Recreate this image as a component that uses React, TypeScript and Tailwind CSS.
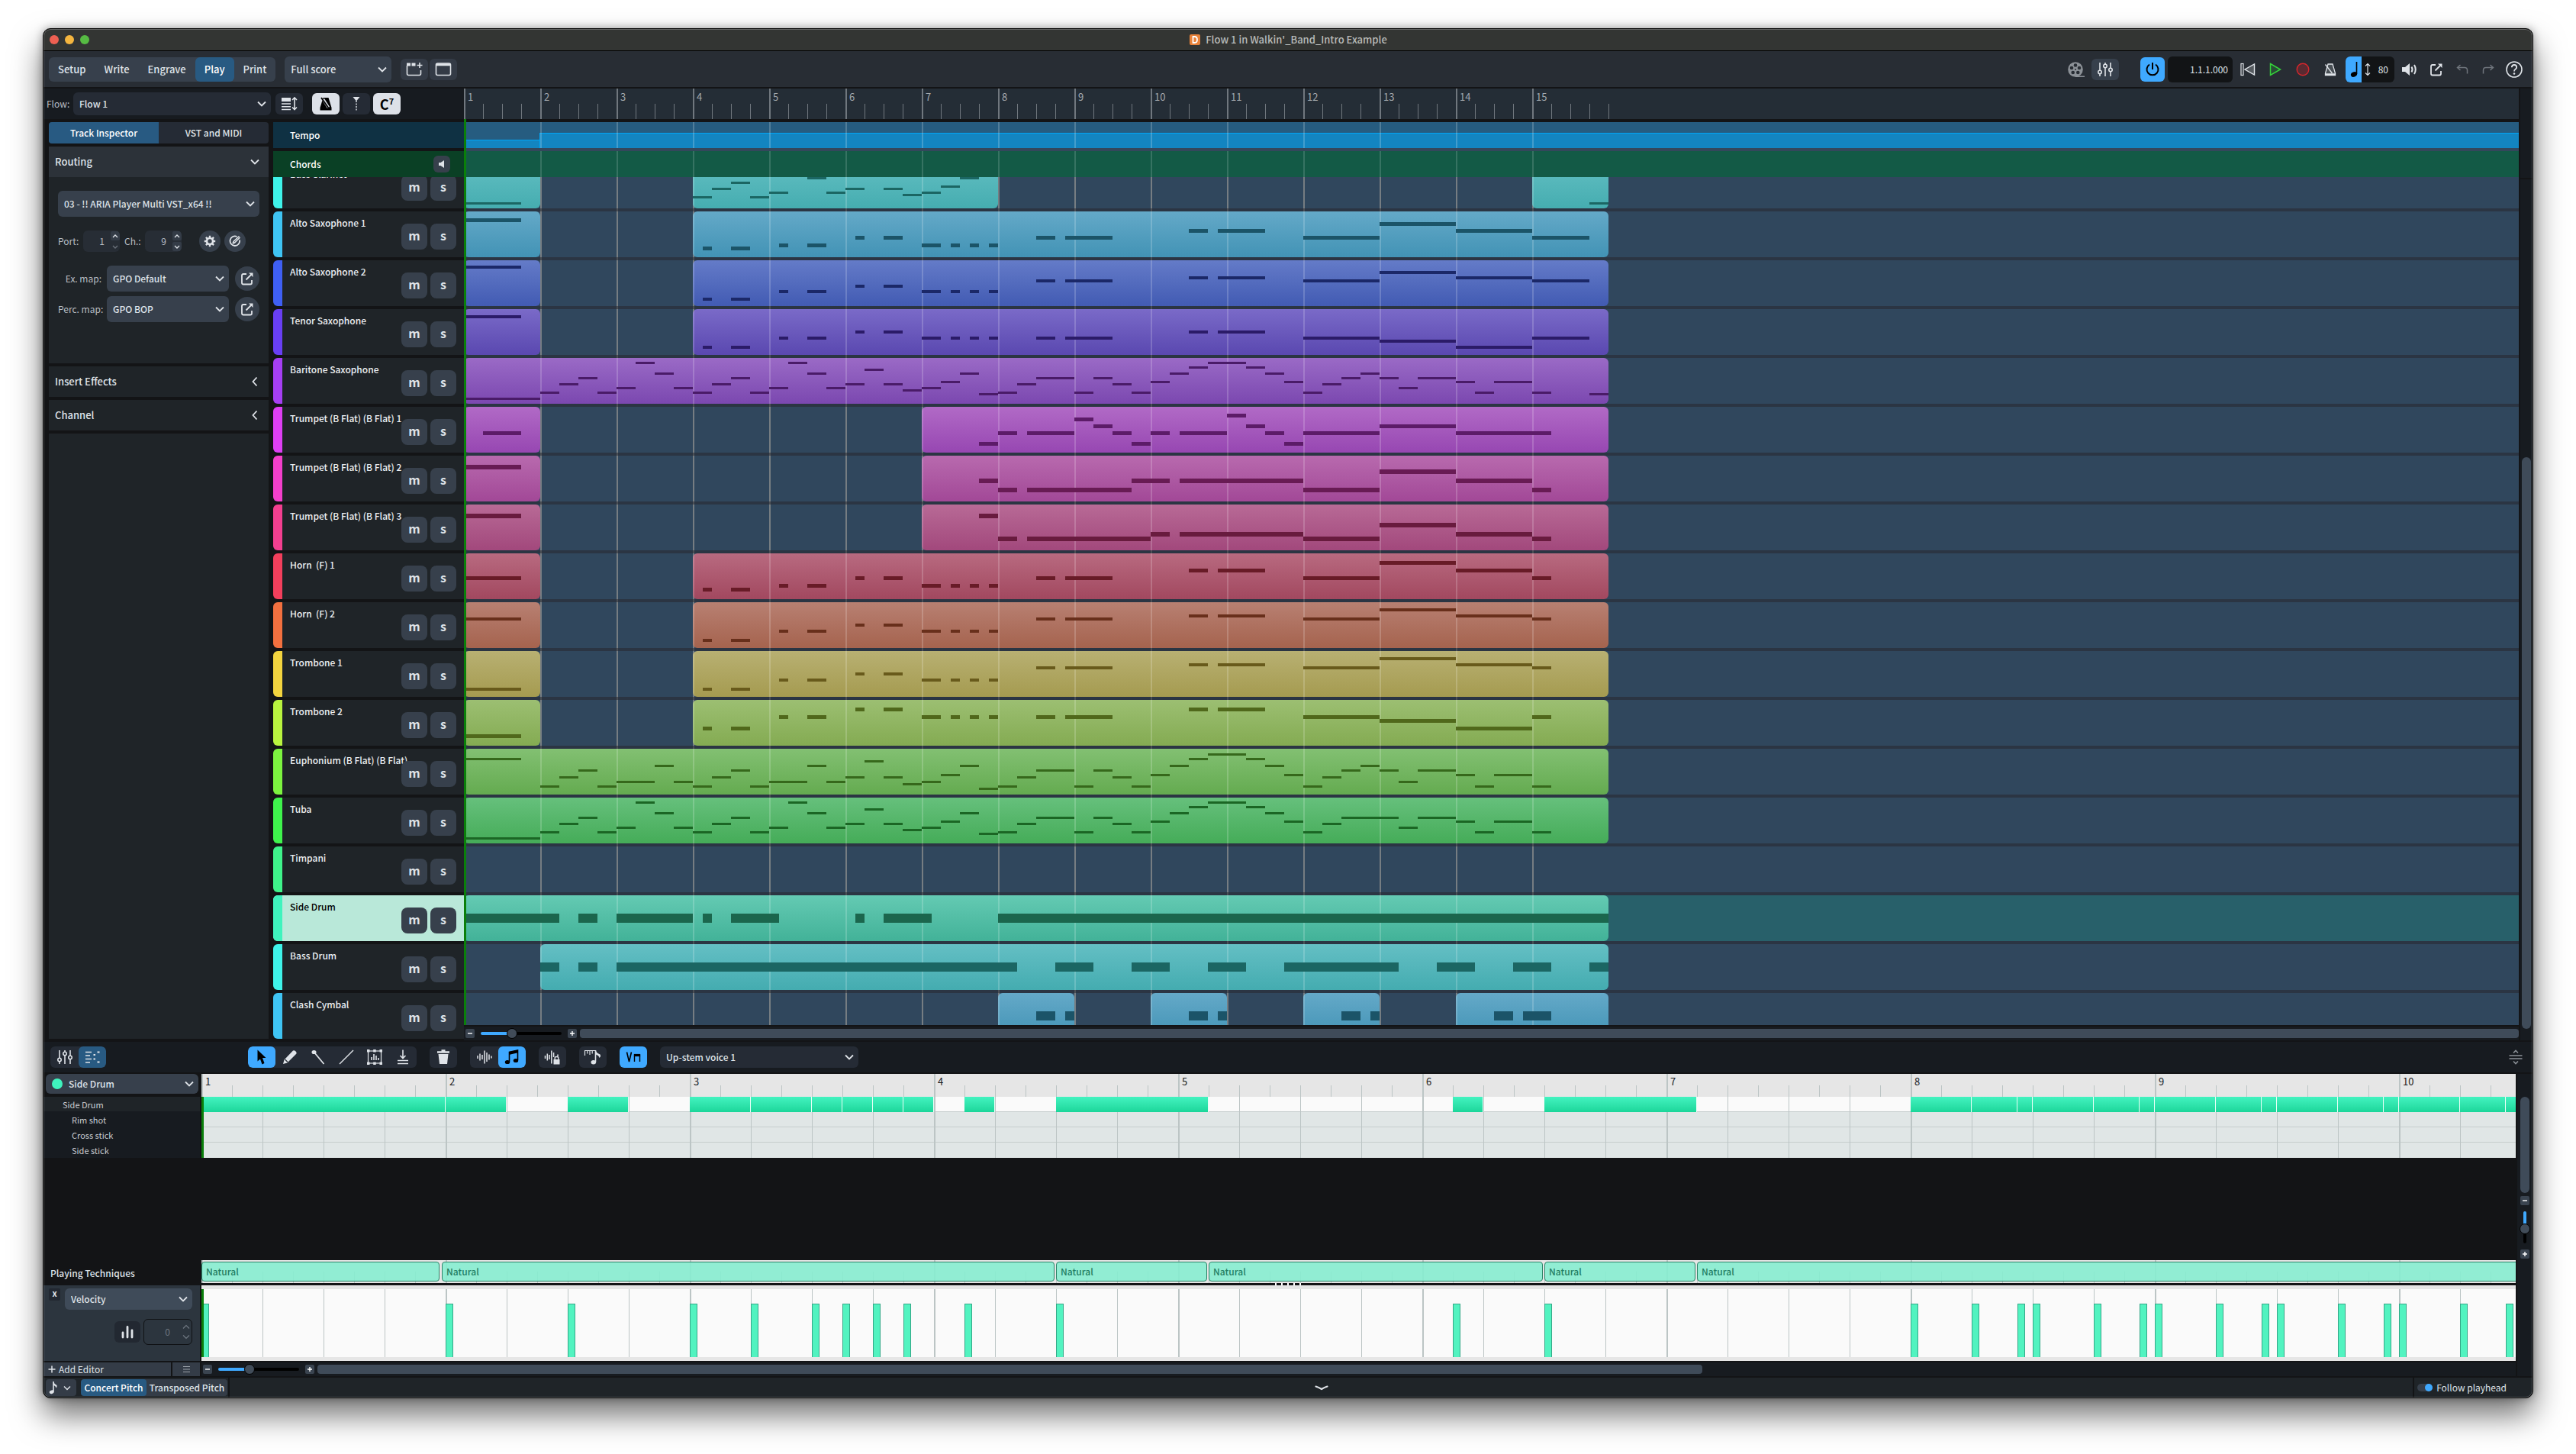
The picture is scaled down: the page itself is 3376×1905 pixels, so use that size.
import React from 'react';
import type { ReactNode } from 'react';

type Note = [start: number, length: number, y: number];

interface Track {
  name: string;
  strip: string;
  top: string;
  bottom: string;
  ink: string;
  noteHeight: number;
  clips: [number, number][];
  notes: Note[];
  selected?: boolean;
}

const BEAT = 25;
const EDITOR_BEAT = 80;

/** Shared brass and sax rhythm; each letter is the vertical place of one group of notes. */
function chorale(first: number, a: number, b: number, c: number, d: number, e: number, f: number, g: number, h: number, i: number, last: number): Note[] {
  return [
    [0, 3, first],
    [12.5, 0.5, a], [14, 1, a],
    [16.5, 0.5, b], [18, 1, b],
    [20.5, 0.5, c], [22, 1, c],
    [24, 1, b], [25.5, 0.5, b], [26.5, 0.5, b], [27.5, 0.5, b],
    [30, 1, d], [31.5, 2.5, d],
    [38, 1, e], [39.5, 2.5, e],
    [44, 4, f], [48, 4, g], [52, 4, h], [56, last, i],
  ];
}

const walkingBass: Note[] = [
  [0, 4, 52], [4, 1, 44], [5, 1, 33], [6, 1, 25], [7, 1, 44], [8, 1, 38], [9, 1, 5], [10, 1, 19], [11, 1, 38],
  [12, 1, 44], [13, 1, 33], [14, 1, 25], [15, 1, 44], [16, 1, 38], [17, 1, 5], [18, 1, 19], [19, 1, 38],
  [20, 1, 33], [21, 1, 14], [22, 1, 33], [23, 1, 41], [24, 1, 38], [25, 1, 30], [26, 1, 19], [27, 1, 46],
  [28, 1, 44], [29, 1, 33], [30, 2, 25], [32, 1, 44], [33, 1, 25], [34, 1, 33], [35, 1, 44],
  [36, 1, 30], [37, 1, 19], [38, 1, 11], [39, 2, 5], [41, 1, 11], [42, 1, 19], [43, 1, 30],
  [44, 1, 44], [45, 1, 33], [46, 1, 25], [47, 1, 19], [48, 1, 25], [49, 1, 38], [50, 2, 25],
  [52, 1, 30], [53, 1, 44], [54, 2, 30], [56, 1, 44],
];

const bassClarinet: Note[] = [
  [0, 3, 52],
  ...walkingBass.filter(([s]) => s >= 12 && s < 27 && s !== 17 && s !== 21),
  [59, 1, 52],
];

const euphonium: Note[] = [
  [0, 3, 12], [4, 1, 48], [5, 1, 36], [6, 1, 27], [7, 1, 48], [8, 2, 42], [10, 1, 21], [11, 1, 42],
  [12, 1, 48], [13, 1, 36], [14, 1, 27], [15, 1, 48], [16, 2, 42], [18, 1, 21], [19, 1, 42],
  [20, 1, 36], [21, 1, 15], [22, 1, 36], [23, 1, 45], [24, 1, 42], [25, 1, 33], [26, 1, 21], [27, 1, 51],
  [28, 1, 48], [29, 1, 36], [30, 2, 27], [32, 1, 48], [33, 1, 27], [34, 1, 36], [35, 1, 48],
  [36, 1, 33], [37, 1, 21], [38, 1, 12], [39, 2, 6], [41, 1, 12], [42, 1, 21], [43, 1, 33],
  [44, 1, 48], [45, 1, 36], [46, 1, 27], [47, 1, 21], [48, 1, 27], [49, 1, 42], [50, 2, 27],
  [52, 1, 33], [53, 1, 48], [54, 2, 33], [56, 1, 48],
];

const tracks: Track[] = [
  { name: 'Bass Clarinet', strip: '#3ff3ea', top: '#62bec2', bottom: '#45adb0', ink: '#1b6663', noteHeight: 3, clips: [[0, 4], [12, 28], [56, 60]], notes: bassClarinet },
  { name: 'Alto Saxophone 1', strip: '#3fc4f3', top: '#64a9c8', bottom: '#4293b5', ink: '#1b5468', noteHeight: 5, clips: [[0, 4], [12, 60]], notes: chorale(9, 46, 42, 32, 32, 23, 32, 14, 23, 32, 3) },
  { name: 'Alto Saxophone 2', strip: '#3f5ff3', top: '#647bc8', bottom: '#425bb3', ink: '#1b2868', noteHeight: 4, clips: [[0, 4], [12, 60]], notes: chorale(7, 49, 39, 32, 25, 21, 25, 14, 21, 25, 3) },
  { name: 'Tenor Saxophone', strip: '#693ff3', top: '#7a6ac8', bottom: '#5a48b0', ink: '#2b1b68', noteHeight: 4, clips: [[0, 4], [12, 60]], notes: chorale(8, 48, 36, 28, 36, 28, 36, 40, 48, 36, 3) },
  { name: 'Baritone Saxophone', strip: '#a63ff3', top: '#9a6ac6', bottom: '#7b48b0', ink: '#4a1b68', noteHeight: 3, clips: [[0, 60]], notes: [...walkingBass, [59, 1, 46]] },
  {
    name: 'Trumpet (B Flat) (B Flat) 1', strip: '#dd3ff3', top: '#b16ac6', bottom: '#9747b2', ink: '#5c1b68', noteHeight: 5, clips: [[0, 4], [24, 60]],
    notes: [[1, 2, 32], [27, 1, 46], [28, 1, 32], [29.5, 2.5, 32], [32, 1, 14], [33, 1, 23], [34, 1, 32], [35, 1, 46], [36, 1, 32], [37.5, 2.5, 32], [40, 1, 9], [41, 1, 23], [42, 1, 32], [43, 1, 46], [44, 4, 32], [48, 4, 23], [52, 5, 32]],
  },
  {
    name: 'Trumpet (B Flat) (B Flat) 2', strip: '#f33fcb', top: '#b86aae', bottom: '#a24897', ink: '#681b54', noteHeight: 6, clips: [[0, 4], [24, 60]],
    notes: [[0, 3, 12], [27, 1, 30], [28, 1, 42], [29.5, 5.5, 42], [35, 2, 30], [37.5, 6.5, 30], [44, 4, 42], [48, 4, 18], [52, 4, 30], [56, 1, 42]],
  },
  {
    name: 'Trumpet (B Flat) (B Flat) 3', strip: '#f33f90', top: '#b86a96', bottom: '#a2487c', ink: '#681b3e', noteHeight: 6, clips: [[0, 4], [24, 60]],
    notes: [[0, 3, 12], [27, 1, 12], [28, 1, 42], [29.5, 6.5, 42], [36, 1, 36], [37.5, 6.5, 36], [44, 4, 42], [48, 4, 24], [52, 4, 36], [56, 1, 42]],
  },
  { name: 'Horn  (F) 1', strip: '#f33f5c', top: '#b86a80', bottom: '#a2485f', ink: '#681b27', noteHeight: 5, clips: [[0, 4], [12, 60]], notes: chorale(30, 45, 40, 30, 30, 20, 30, 10, 20, 30, 1) },
  { name: 'Horn  (F) 2', strip: '#f3703f', top: '#b88072', bottom: '#a5634e', ink: '#682f1b', noteHeight: 4, clips: [[0, 4], [12, 60]], notes: chorale(20, 48, 36, 28, 20, 16, 20, 8, 16, 20, 1) },
  { name: 'Trombone 1', strip: '#f3d43f', top: '#b8b072', bottom: '#a59b50', ink: '#685a1b', noteHeight: 4, clips: [[0, 4], [12, 60]], notes: chorale(48, 48, 36, 28, 20, 16, 20, 8, 16, 20, 1) },
  { name: 'Trombone 2', strip: '#b9f33f', top: '#9cbf72', bottom: '#84ab52', ink: '#50681b', noteHeight: 5, clips: [[0, 4], [12, 60]], notes: chorale(45, 35, 20, 10, 20, 10, 20, 25, 35, 20, 1) },
  { name: 'Euphonium (B Flat) (B Flat)', strip: '#7cf33f', top: '#82c072', bottom: '#64ab50', ink: '#36681b', noteHeight: 3, clips: [[0, 60]], notes: euphonium },
  { name: 'Tuba', strip: '#3ff34c', top: '#66c07c', bottom: '#45ac58', ink: '#1b6624', noteHeight: 3, clips: [[0, 60]], notes: walkingBass.map(([s, l, y]): Note => [s, l, s === 47 ? 25 : y]) },
  { name: 'Timpani', strip: '#3ff38a', top: '#66c07c', bottom: '#45ac58', ink: '#1b6624', noteHeight: 3, clips: [], notes: [] },
  {
    name: 'Side Drum', strip: '#3ff3bd', top: '#64cab3', bottom: '#42b298', ink: '#1b664d', noteHeight: 12, clips: [[0, 60]], selected: true,
    notes: [[0, 5, 24], [6, 1, 24], [8, 4, 24], [12.5, 0.5, 24], [14, 2.5, 24], [20.5, 0.5, 24], [22, 2.5, 24], [28, 32, 24]],
  },
  {
    name: 'Bass Drum', strip: '#3ff3ea', top: '#64bfc4', bottom: '#44acb0', ink: '#1b6663', noteHeight: 12, clips: [[4, 60]],
    notes: [[4, 1, 24], [6, 1, 24], [8, 21, 24], [31, 2, 24], [35, 2, 24], [39, 2, 24], [43, 6, 24], [51, 2, 24], [55, 2, 24], [59, 1, 24]],
  },
  {
    name: 'Clash Cymbal', strip: '#3fc4f3', top: '#64a9c8', bottom: '#4293b5', ink: '#1b5468', noteHeight: 12, clips: [[28, 32], [36, 40], [44, 48], [52, 60]],
    notes: [[30, 1, 24], [31.5, 0.5, 24], [38, 1, 24], [39.5, 0.5, 24], [46, 1, 24], [47.5, 0.5, 24], [54, 1, 24], [55.5, 1.5, 24]],
  },
];

const editorHits: [number, number][] = [
  [0, 4], [4, 1], [6, 1], [8, 1], [9, 1], [10, 0.5], [10.5, 0.5], [11, 0.5], [11.5, 0.5], [12.5, 0.5], [14, 2.5],
  [20.5, 0.5], [22, 2.5], [28, 1], [29, 0.75], [29.75, 0.25], [30, 1], [31, 0.75], [31.75, 0.25], [32, 1],
  [33, 0.75], [33.75, 0.25], [34, 1], [35, 0.75], [35.75, 0.25], [36, 1], [37, 0.75], [37.75, 0.5],
];

const techniqueSpans: [number, number][] = [[0, 312], [315, 1118], [1120, 1318], [1320, 1758], [1760, 1958], [1960, 3060]];

/* ---------- icons ---------- */

function Svg({ w, h, children, className = '' }: { w: number; h: number; children: ReactNode; className?: string }) {
  return (
    <svg width={w} height={h} viewBox={`0 0 ${w} ${h}`} fill="none" stroke="currentColor" strokeWidth="1.6" className={`shrink-0 ${className}`} aria-hidden="true">
      {children}
    </svg>
  );
}

const Chevron = () => <Svg w={12} h={8}><path d="M1 1.5 L6 6.5 L11 1.5" strokeWidth="1.8" /></Svg>;
const ChevronLeft = () => <Svg w={8} h={14}><path d="M6.5 1.5 L1.5 7 L6.5 12.5" strokeWidth="1.8" /></Svg>;

const TabsPlusIcon = () => (
  <Svg w={22} h={20}>
    <path d="M1.5 5 V15.5 Q1.5 17.5 3.5 17.5 H17.5 Q19.5 17.5 19.5 15.5 V11" />
    <path d="M1 3.5 H6 M7.5 3.5 H12.5" strokeWidth="4" />
    <path d="M18 1 V8 M14.5 4.5 H21.5" />
  </Svg>
);
const WindowIcon = () => (
  <Svg w={22} h={20}>
    <rect x="1.5" y="2" width="19" height="15.5" rx="2" />
    <path d="M1.5 3.8 H20.5" strokeWidth="3" />
  </Svg>
);
const TrackHeightIcon = () => (
  <Svg w={22} h={20}>
    <rect x="1" y="2" width="12" height="5" fill="currentColor" stroke="none" />
    <path d="M1 10 H13 M1 13.8 H13 M1 17.5 H13" />
    <path d="M18 2.5 V17 M15 5 L18 2 L21 5 M15 14.5 L18 17.5 L21 14.5" />
  </Svg>
);
const MetronomeSolid = () => (
  <Svg w={18} h={20}>
    <path d="M5.5 2 H12.5 L16.5 15 V18.5 H1.5 V15 Z" fill="currentColor" stroke="none" />
    <path d="M5.5 4 L12.5 15" stroke="#dde1e8" strokeWidth="3.6" />
    <path d="M3 2 L12.5 15.5" strokeWidth="1.8" />
  </Svg>
);
const PlayheadIcon = () => (
  <Svg w={10} h={20}>
    <path d="M0.5 1 H9.5 L5 6.5 Z" fill="currentColor" stroke="none" />
    <path d="M5 6 V19.5" strokeDasharray="2 1.5" strokeWidth="1.4" />
  </Svg>
);
const GearIcon = () => (
  <Svg w={16} h={16}>
    <circle cx="8" cy="8" r="4" strokeWidth="2.6" />
    <path d="M8 0.8 V3.5 M8 12.5 V15.2 M0.8 8 H3.5 M12.5 8 H15.2 M2.9 2.9 L4.8 4.8 M11.2 11.2 L13.1 13.1 M13.1 2.9 L11.2 4.8 M4.8 11.2 L2.9 13.1" strokeWidth="2.4" />
  </Svg>
);
const EditCircleIcon = () => (
  <Svg w={16} h={16}>
    <path d="M10.5 2 A6.3 6.3 0 1 0 14 6.5" strokeWidth="1.8" />
    <path d="M5 11 L6 8.5 L13.5 1.5 M5 11 L7.5 10 L14.5 3" strokeWidth="1.5" />
  </Svg>
);
const ExternalIcon = () => (
  <Svg w={18} h={18}>
    <path d="M8 3 H4 Q2 3 2 5 V14.5 Q2 16.5 4 16.5 H13 Q15 16.5 15 14.5 V11" strokeWidth="1.8" />
    <path d="M7.5 10.5 L15 3" strokeWidth="1.8" />
    <path d="M11 1.5 H16.5 V7 Z" fill="currentColor" stroke="none" />
  </Svg>
);
const FilmIcon = () => (
  <Svg w={24} h={22}>
    <circle cx="11" cy="11" r="9" fill="currentColor" />
    <g fill="#282d34" stroke="none">
      <circle cx="11" cy="5.5" r="2.3" /><circle cx="16" cy="9" r="2.3" /><circle cx="14.3" cy="15" r="2.3" />
      <circle cx="7.7" cy="15" r="2.3" /><circle cx="6" cy="9" r="2.3" /><circle cx="11" cy="11" r="1" />
    </g>
    <path d="M11 20.3 H23" strokeWidth="1.4" />
  </Svg>
);
const MixerIcon = () => (
  <Svg w={20} h={20}>
    <path d="M3 1 V11 M3 16 V19 M10 1 V3 M10 8 V19 M17 1 V8 M17 13 V19" />
    <circle cx="3" cy="13.5" r="2.2" /><circle cx="10" cy="5.5" r="2.2" /><circle cx="17" cy="10.5" r="2.2" />
  </Svg>
);
const PowerIcon = () => (
  <Svg w={20} h={20}>
    <path d="M10 1 V10" strokeWidth="2" />
    <path d="M6 3.5 A7.5 7.5 0 1 0 14 3.5" strokeWidth="2" />
  </Svg>
);
const RewindIcon = () => (
  <Svg w={20} h={18}>
    <rect x="1" y="1.5" width="3" height="15" strokeWidth="1.2" />
    <path d="M18.5 2 V16 L6 9 Z" fill="#565b60" strokeWidth="1.4" />
  </Svg>
);
const PlayIcon = () => <Svg w={16} h={18}><path d="M1.5 1.5 L14.5 9 L1.5 16.5 Z" fill="#284d35" strokeWidth="1.5" /></Svg>;
const RecordIcon = () => <Svg w={18} h={18}><circle cx="9" cy="9" r="7.8" fill="#5a2a31" strokeWidth="1.4" /></Svg>;
const MetronomeIcon = () => (
  <Svg w={16} h={18}>
    <path d="M5 2 H11 L14.5 14 V16.5 H1.5 V14 Z" fill="#4a5056" strokeWidth="1.3" />
    <path d="M1.5 15.5 H14.5" strokeWidth="2.4" />
    <path d="M1.5 2.5 L10.5 14" strokeWidth="1.4" />
  </Svg>
);
const QuarterNote = () => (
  <Svg w={10} h={22}>
    <path d="M8.5 1 V17" />
    <ellipse cx="5" cy="17.5" rx="4.2" ry="3.2" fill="currentColor" stroke="none" transform="rotate(-20 5 17.5)" />
  </Svg>
);
const EighthNote = () => (
  <Svg w={12} h={18}>
    <path d="M6 1 V14.5" />
    <path d="M6 1 Q7 4.5 10.5 6 Q11 8 9.5 9.5 Q9 6.5 6 6 Z" fill="currentColor" stroke="none" />
    <ellipse cx="3.7" cy="14.8" rx="3" ry="2.3" fill="currentColor" stroke="none" transform="rotate(-20 3.7 14.8)" />
  </Svg>
);
const UpDownIcon = () => <Svg w={8} h={18}><path d="M4 1.5 V16.5 M1 4.5 L4 1.5 L7 4.5 M1 13.5 L4 16.5 L7 13.5" strokeWidth="1.2" /></Svg>;
const SpeakerIcon = () => (
  <Svg w={22} h={18}>
    <path d="M1 6 H5 L11 1 V17 L5 12 H1 Z" fill="currentColor" stroke="none" />
    <path d="M13.5 5.5 Q15.5 9 13.5 12.5 M17 3 Q20.5 9 17 15" strokeWidth="2" />
  </Svg>
);
const UndoIcon = () => <Svg w={16} h={14}><path d="M5.5 1 L1.5 4.5 L5.5 8 M1.5 4.5 H11 Q14.5 4.5 14.5 8 V12.5" strokeWidth="1.5" /></Svg>;
const RedoIcon = () => <Svg w={16} h={14}><path d="M10.5 1 L14.5 4.5 L10.5 8 M14.5 4.5 H5 Q1.5 4.5 1.5 8 V12.5" strokeWidth="1.5" /></Svg>;
const HelpIcon = () => (
  <Svg w={24} h={24}>
    <circle cx="12" cy="12" r="10" />
    <path d="M8.8 9.2 Q9 6 12 6 Q15.2 6 15.2 9 Q15.2 10.8 13.5 11.7 Q12 12.5 12 14.5" strokeWidth="1.8" />
    <circle cx="12" cy="17.5" r="1.3" fill="currentColor" stroke="none" />
  </Svg>
);
const SmallSpeaker = () => <Svg w={8} h={10}><path d="M0 3 H2.5 L7 0 V10 L2.5 7 H0 Z" fill="currentColor" stroke="none" /></Svg>;
const PianoRollIcon = () => (
  <Svg w={20} h={18}>
    <path d="M1 2.5 H9 M1 7 H7 M1 11.5 H9 M1 16 H7" />
    <path d="M16.5 2.5 H19.5 M11.5 6 H14 M11.5 11.5 H14 M16.5 15.5 H19.5" strokeWidth="2" />
  </Svg>
);
const PointerIcon = () => <Svg w={14} h={20}><path d="M1.5 0.5 L12.5 11 H8 L10.5 18 L7.5 19.5 L5 12.5 L1.5 15.5 Z" fill="currentColor" stroke="none" /></Svg>;
const PencilIcon = () => (
  <Svg w={20} h={20}>
    <path d="M1 19 L2.5 13.5 L14 1.5 Q15.5 0.5 17.5 2.5 Q19.5 4.5 18 6 L6.5 17.5 Z" fill="currentColor" stroke="none" />
    <path d="M3.5 13 L7 16.5" stroke="#252b35" strokeWidth="1.2" />
  </Svg>
);
const StickIcon = () => (
  <Svg w={18} h={20}>
    <ellipse cx="3.5" cy="3.5" rx="3" ry="2.6" fill="currentColor" stroke="none" />
    <path d="M4 4 L16.5 19" strokeWidth="1.8" />
  </Svg>
);
const LineIcon = () => <Svg w={20} h={20}><path d="M1 19 L19 1" strokeWidth="1.4" /></Svg>;
const TransformIcon = () => (
  <Svg w={22} h={20}>
    <rect x="2.5" y="2" width="17" height="16" strokeWidth="1.2" />
    <g fill="currentColor" stroke="none">
      <rect x="1" y="0" width="3.5" height="3.5" /><rect x="9.2" y="0" width="3.5" height="3.5" /><rect x="17.5" y="0" width="3.5" height="3.5" />
      <rect x="1" y="16.5" width="3.5" height="3.5" /><rect x="9.2" y="16.5" width="3.5" height="3.5" /><rect x="17.5" y="16.5" width="3.5" height="3.5" />
    </g>
    <path d="M7 14 V10 M10 14 V6 M13 14 V8 M16 14 V11" />
  </Svg>
);
const QuantizeIcon = () => <Svg w={16} h={20}><path d="M8 0.5 V11 M4.5 8 L8 11.5 L11.5 8 M1 14.5 H15 M1 18.5 H15" /></Svg>;
const TrashIcon = () => (
  <Svg w={18} h={20}>
    <path d="M1 3.5 H17 M6.5 1.5 H11.5" strokeWidth="2.4" />
    <path d="M2.5 6 H15.5 L14 19 H4 Z" fill="currentColor" stroke="none" />
  </Svg>
);
const WaveIcon = () => <Svg w={20} h={20}><path d="M1 8 V12 M4 5.5 V14.5 M7 7 V13 M10 1.5 V18.500 M13 4 V16 M16 6.500 V13.500 M19 8.500 V11.500" strokeWidth="1.5" /></Svg>;
const BeamedNotes = () => (
  <Svg w={20} h={20}>
    <path d="M6.5 16 V3.5 L17.5 1 V14" />
    <path d="M6.5 5 L17.5 2.5" strokeWidth="3.5" />
    <ellipse cx="4" cy="16.5" rx="3.2" ry="2.6" fill="currentColor" stroke="none" />
    <ellipse cx="15" cy="14.5" rx="3.2" ry="2.6" fill="currentColor" stroke="none" />
  </Svg>
);
const WaveLockIcon = () => (
  <Svg w={22} h={20}>
    <path d="M1.5 8 V12 M4.3 5.5 V14.5 M7 7 V13 M9.8 1.5 V18.5 M12.6 4 V10 M18 6.5 V9" strokeWidth="1.5" />
    <rect x="12.5" y="13" width="8" height="6.5" fill="currentColor" stroke="none" />
    <path d="M14.2 13 V11 Q14.2 9.5 16.5 9.5 Q18.8 9.5 18.8 11 V13" strokeWidth="1.4" />
  </Svg>
);
const RulerNoteIcon = () => (
  <Svg w={24} h={20}>
    <path d="M1 1.5 H15 M1.5 1.5 V8 M4.8 1.5 V5.5 M8 1.5 V7 M11.2 1.5 V5.5" strokeWidth="1.2" />
    <path d="M15.5 1 V16.5" />
    <path d="M15.5 1 Q17 5 21.5 6.5 Q23 9 20.5 11 Q20 7.5 15.5 6.5 Z" fill="currentColor" stroke="none" />
    <ellipse cx="12.8" cy="16.8" rx="3.3" ry="2.7" fill="currentColor" stroke="none" />
  </Svg>
);
const BowingIcon = () => (
  <Svg w={20} h={16}>
    <path d="M1.5 1.5 L4.5 14 L7.5 1.5" />
    <path d="M11.5 14 V6 M18.5 14 V6" strokeWidth="1.4" />
    <path d="M10.8 5.5 H19.2" strokeWidth="3.2" />
  </Svg>
);
const SplitIcon = () => <Svg w={18} h={20}><path d="M6 4.5 L9 1.5 L12 4.5 M6 15.5 L9 18.5 L12 15.5 M0.5 8 H17.5 M0.5 12 H17.5" /></Svg>;
const BarsIcon = () => <Svg w={18} h={18}><path d="M3 10 V16 M9 2.5 V16 M15 7 V16" strokeWidth="2.8" strokeLinecap="round" /></Svg>;
const AppIcon = () => (
  <Svg w={16} h={16}>
    <rect x="1" y="1" width="14" height="14" rx="2" fill="#e8823a" stroke="none" />
    <path d="M5.5 4 V12 H7.5 Q11 12 11 8 Q11 4 7.5 4 Z" stroke="#ffffff" strokeWidth="1.8" />
  </Svg>
);

/* ---------- controls ---------- */

function Select({ label, value, className = '', text = 'text-[12px]', pad = 'pl-2' }: { label: string; value: string; className?: string; text?: string; pad?: string }) {
  return (
    <div className={`relative flex items-center rounded-md text-[#dfe3e8] ${className}`}>
      <select aria-label={label} className={`h-full w-full appearance-none bg-transparent pr-6 font-medium outline-none ${pad} ${text}`}>
        <option>{value}</option>
      </select>
      <span className="pointer-events-none absolute right-1.5"><Chevron /></span>
    </div>
  );
}

function IconButton({ label, className = '', children }: { label: string; className?: string; children: ReactNode }) {
  return (
    <button type="button" aria-label={label} className={`flex shrink-0 items-center justify-center ${className}`}>
      {children}
    </button>
  );
}

function Spinner({ label, value, dimDown }: { label: string; value: string; dimDown?: boolean }) {
  return (
    <div className="flex h-7 w-12 items-center overflow-hidden rounded-md bg-[#272d35]">
      <input aria-label={label} defaultValue={value} className="w-7 min-w-0 bg-transparent text-right text-[12px] text-[#b9bec4] outline-none" />
      <div className="ml-auto flex w-3 flex-col items-center gap-[2px] text-[#dfe3e8]">
        <IconButton label={`${label} up`} className="h-3 w-3 rounded-xs bg-[#343c47]">
          <Svg w={8} h={5}><path d="M1 4 L4 1 L7 4" strokeWidth="1.3" /></Svg>
        </IconButton>
        <IconButton label={`${label} down`} className={dimDown ? 'h-3 w-3 text-[#6b727b]' : 'h-3 w-3 rounded-xs bg-[#343c47]'}>
          <Svg w={8} h={5}><path d="M1 1 L4 4 L7 1" strokeWidth="1.3" /></Svg>
        </IconButton>
      </div>
    </div>
  );
}

function ZoomButton({ label, plus }: { label: string; plus?: boolean }) {
  return (
    <button type="button" aria-label={label} className="flex h-3 w-3 shrink-0 items-center justify-center rounded-xs bg-[#3a4450] text-white">
      <Svg w={8} h={8}><path d={plus ? 'M1 4 H7 M4 1 V7' : 'M1 4 H7'} strokeWidth="1.4" /></Svg>
    </button>
  );
}

function ZoomStrip({ label }: { label: string }) {
  return (
    <div className="flex shrink-0 items-center gap-2 px-[2px]">
      <ZoomButton label={`${label} out`} />
      <input
        type="range"
        aria-label={label}
        min={0}
        max={100}
        defaultValue={37}
        className="h-1 w-[106px] appearance-none rounded-full bg-[linear-gradient(90deg,#3fa9ff_38%,#000000_38%)] [&::-webkit-slider-thumb]:h-[14px] [&::-webkit-slider-thumb]:w-[14px] [&::-webkit-slider-thumb]:appearance-none [&::-webkit-slider-thumb]:rounded-full [&::-webkit-slider-thumb]:border [&::-webkit-slider-thumb]:border-black [&::-webkit-slider-thumb]:bg-[#414c59]"
      />
      <ZoomButton label={`${label} in`} plus />
    </div>
  );
}

/* ---------- top bars ---------- */

function TitleBar() {
  return (
    <header className="relative flex h-[29px] shrink-0 items-center border-b border-black bg-[#333533] pl-2">
      <div className="flex gap-2">
        <span className="h-3 w-3 rounded-full bg-[#ee6052]" />
        <span className="h-3 w-3 rounded-full bg-[#f5b63f]" />
        <span className="h-3 w-3 rounded-full bg-[#56bb43]" />
      </div>
      <h1 className="absolute inset-x-0 flex items-center justify-center gap-1.5 text-[13px] font-medium text-[#b9bbb9]">
        <AppIcon />
        Flow 1 in Walkin&apos;_Band_Intro Example
      </h1>
    </header>
  );
}

function Toolbar() {
  return (
    <div className="flex h-[47px] shrink-0 items-center bg-[#282d34] pr-[7px] pl-[7px] text-[#dfe3e8]">
      <nav className="flex h-8 overflow-hidden rounded-md bg-[#37404c] text-[13px] font-medium">
        {['Setup', 'Write', 'Engrave', 'Play', 'Print'].map((mode) => (
          <button key={mode} type="button" className={mode === 'Play' ? 'rounded-md bg-[#285a82] px-3 text-white' : 'px-3'}>
            {mode}
          </button>
        ))}
      </nav>
      <Select label="Layout" value="Full score" text="text-[13px]" className="ml-3 h-[34px] w-[140px] bg-[#37404c]" />
      <div className="ml-3 flex gap-[2px]">
        <IconButton label="New tab" className="h-7 w-9 rounded-md bg-[#343b46]"><TabsPlusIcon /></IconButton>
        <IconButton label="New window" className="h-7 w-9 rounded-md bg-[#343b46]"><WindowIcon /></IconButton>
      </div>

      <div className="ml-auto flex items-center">
        <IconButton label="Video" className="h-7 w-9 text-[#8c9197]"><FilmIcon /></IconButton>
        <IconButton label="Mixer" className="ml-0.5 h-7 w-9 rounded-md bg-[#37404c]"><MixerIcon /></IconButton>
        <IconButton label="Activate project" className="ml-7 h-8 w-8 rounded-md bg-[#3fa9ff] text-black"><PowerIcon /></IconButton>
        <output className="ml-1 flex h-[34px] w-[85px] items-center justify-end rounded-md bg-[#121416] pr-1.5 text-[12px]">1.1.1.000</output>
        <IconButton label="Rewind" className="ml-0.5 h-8 w-9"><RewindIcon /></IconButton>
        <IconButton label="Play" className="h-8 w-9 text-[#35d33a]"><PlayIcon /></IconButton>
        <IconButton label="Record" className="h-8 w-9 text-[#d8262c]"><RecordIcon /></IconButton>
        <IconButton label="Click" className="h-8 w-9"><MetronomeIcon /></IconButton>
        <div className="ml-0.5 flex h-[34px] w-16 items-center overflow-hidden rounded-md bg-[#121416]">
          <IconButton label="Tempo mode" className="h-full w-[21px] bg-[#3fa9ff] text-black"><QuarterNote /></IconButton>
          <span className="ml-1"><UpDownIcon /></span>
          <span className="ml-auto pr-2 text-[12px]">80</span>
        </div>
        <IconButton label="Volume" className="ml-0.5 h-8 w-9"><SpeakerIcon /></IconButton>
        <IconButton label="Transport window" className="h-8 w-[34px]"><ExternalIcon /></IconButton>
        <IconButton label="Undo" className="h-8 w-[34px] text-[#6f757c]"><UndoIcon /></IconButton>
        <IconButton label="Redo" className="h-8 w-[34px] text-[#6f757c]"><RedoIcon /></IconButton>
        <IconButton label="Help" className="h-8 w-[34px]"><HelpIcon /></IconButton>
      </div>
    </div>
  );
}

function FlowBar() {
  return (
    <div className="flex h-10 shrink-0 items-center bg-[#171b20] pl-1 text-[#dfe3e8]">
      <span className="w-[35px] text-[12px] text-[#b9bec4]">Flow:</span>
      <Select label="Flow" value="Flow 1" className="h-[30px] w-[259px] bg-[#252b35]" />
      <IconButton label="Track heights" className="ml-1.5 h-7 w-9 rounded-md bg-[#252b35]"><TrackHeightIcon /></IconButton>
      <IconButton label="Tempo track" className="ml-3 h-7 w-9 rounded-md bg-[#dde1e8] text-black"><MetronomeSolid /></IconButton>
      <IconButton label="Markers track" className="ml-1 h-7 w-9 rounded-md bg-[#252b35]"><PlayheadIcon /></IconButton>
      <IconButton label="Chords track" className="ml-1 h-7 w-9 rounded-md bg-[#dde1e8] text-black">
        <span className="flex items-start text-[18px] leading-5 font-bold">C<span className="text-[11px] leading-3">7</span></span>
      </IconButton>
    </div>
  );
}

/* ---------- inspector ---------- */

function MapRow({ label, value }: { label: string; value: string }) {
  return (
    <div className="flex items-center">
      <span className="w-[57px] text-right text-[12px] whitespace-nowrap text-[#b9bec4]">{label}</span>
      <Select label={label} value={value} className="ml-[7px] h-[34px] w-40 bg-[#37404c]" />
      <IconButton label={`Edit ${label}`} className="ml-2 h-8 w-8 rounded-full bg-[#37404c] text-[#dfe3e8]"><ExternalIcon /></IconButton>
    </div>
  );
}

function Inspector() {
  return (
    <aside className="flex w-72 shrink-0 flex-col gap-1">
      <div className="flex h-7 overflow-hidden rounded-sm bg-[#252b35] text-[12px] font-medium text-[#dfe3e8]">
        <button type="button" className="flex-1 bg-[#285a82] text-white">Track Inspector</button>
        <button type="button" className="flex-1">VST and MIDI</button>
      </div>
      <section className="flex flex-col">
        <button type="button" className="flex h-10 items-center justify-between bg-[#2c3239] pr-3 pl-2 text-[13px] font-medium text-[#dfe3e8]">
          Routing
          <Chevron />
        </button>
        <div className="flex h-[244px] flex-col bg-[#1f2428] px-3 pt-[18px]">
          <Select label="Plug-in" value="03 - !! ARIA Player Multi VST_x64 !!" className="h-[34px] w-[264px] bg-[#37404c]" />
          <div className="mt-[18px] flex items-center text-[12px] text-[#b9bec4]">
            <span className="w-[33px]">Port:</span>
            <Spinner label="Port" value="1" dimDown />
            <span className="w-[33px] pl-1.5">Ch.:</span>
            <Spinner label="Channel" value="9" />
            <IconButton label="Endpoint setup" className="ml-[23px] h-7 w-7 rounded-full bg-[#37404c] text-[#dfe3e8]"><GearIcon /></IconButton>
            <IconButton label="Edit plug-in" className="ml-[5px] h-7 w-7 rounded-full bg-[#37404c] text-[#dfe3e8]"><EditCircleIcon /></IconButton>
          </div>
          <div className="mt-[18px] flex flex-col gap-1.5">
            <MapRow label="Ex. map:" value="GPO Default" />
            <MapRow label="Perc. map:" value="GPO BOP" />
          </div>
        </div>
      </section>
      {['Insert Effects', 'Channel'].map((name) => (
        <button key={name} type="button" className="flex h-10 shrink-0 items-center justify-between bg-[#1f2428] pr-3.5 pl-2 text-[13px] font-medium text-[#dfe3e8]">
          {name}
          <ChevronLeft />
        </button>
      ))}
      <div className="flex-1 bg-[#1f2428]" />
    </aside>
  );
}

/* ---------- track headers ---------- */

function TrackHeader({ track }: { track: Track }) {
  const ms = 'h-[34px] w-[34px] rounded-lg bg-[#37404c] pb-1 text-[16px] leading-none font-bold text-[#dfe3e8]';
  return (
    <div className={`relative flex h-[60px] shrink-0 overflow-hidden rounded-l-md ${track.selected ? 'bg-[#b9e8d9]' : 'bg-[#1f2428]'}`}>
      <div className="w-3 shrink-0" style={{ backgroundColor: track.strip }} />
      <h3 className={`pt-[5px] pl-2.5 text-[12px] leading-5 font-medium whitespace-pre ${track.selected ? 'text-black' : 'text-[#eceff2]'}`}>{track.name}</h3>
      <div className="absolute top-4 right-2.5 flex gap-1">
        <button type="button" aria-label={`Mute ${track.name}`} className={ms}>m</button>
        <button type="button" aria-label={`Solo ${track.name}`} className={ms}>s</button>
      </div>
    </div>
  );
}

function TrackHeaders() {
  return (
    <div className="flex w-[250px] shrink-0 flex-col">
      <div className="flex h-[34px] shrink-0 items-center bg-[#0f3143] pl-[22px] text-[12px] font-medium text-white">Tempo</div>
      <div className="mt-1 flex h-[34px] shrink-0 items-center justify-between bg-[#0a4025] pr-[18px] pl-[22px] text-[12px] font-medium text-white">
        Chords
        <IconButton label="Play chords" className="h-[22px] w-[22px] rounded-md bg-[#37404c] text-[#dfe3e8]"><SmallSpeaker /></IconButton>
      </div>
      <div className="min-h-0 flex-1 overflow-hidden">
        <div className="-mt-[19px] flex flex-col gap-1">
          {tracks.map((t) => <TrackHeader key={t.name} track={t} />)}
        </div>
      </div>
    </div>
  );
}

/* ---------- arrangement ---------- */

function Lane({ track }: { track: Track }) {
  return (
    <div className={`relative h-[60px] shrink-0 ${track.selected ? 'bg-[#28606a]' : 'bg-[#30475d]'}`}>
      <div className="absolute inset-y-0 left-0 w-[1500px] bg-[linear-gradient(90deg,#767d82_2px,transparent_2px)] bg-[length:100px_100%]" />
      {track.clips.map(([from, to]) => (
        <div
          key={from}
          className="absolute inset-y-0 overflow-hidden rounded-md"
          style={{ left: from * BEAT, width: (to - from) * BEAT, backgroundImage: `linear-gradient(${track.top}, ${track.bottom})` }}
        >
          <div className="absolute inset-0 bg-[linear-gradient(90deg,rgba(255,255,255,0.18)_2px,transparent_2px)] bg-[length:100px_100%]" />
        </div>
      ))}
      {track.notes.map(([start, length, y]) => (
        <div
          key={start}
          className="absolute"
          style={{ left: start * BEAT, width: length * BEAT, top: y, height: track.noteHeight, backgroundColor: track.ink }}
        />
      ))}
    </div>
  );
}

function Arrangement() {
  return (
    <div className="relative flex min-w-0 flex-1 flex-col">
      <div className="relative h-10 shrink-0 bg-[#242d36]">
        <div className="absolute bottom-0 left-0 h-5 w-[1501px] bg-[linear-gradient(90deg,#70777e_1px,transparent_1px)] bg-[length:25px_100%]" />
        <div className="absolute inset-y-0 left-0 flex bg-[linear-gradient(90deg,#70777e_2px,transparent_2px)] bg-[length:100px_100%]">
          {Array.from({ length: 15 }, (_, i) => (
            <span key={i} className="w-[100px] pl-[5px] text-[13px] leading-[22px] text-[#a4a9ae]">{i + 1}</span>
          ))}
        </div>
      </div>
      <div className="relative mt-1 h-[34px] shrink-0 bg-[#265c80]">
        <div className="absolute bottom-0 left-0 h-[11px] w-[100px] border-t border-[#00a5f5] bg-[#1385c1]" />
        <div className="absolute right-0 bottom-0 left-[99px] h-5 border-t border-l border-[#00a5f5] bg-[#1385c1]" />
        <div className="absolute inset-y-0 left-0 w-[1500px] bg-[linear-gradient(90deg,rgba(255,255,255,0.2)_2px,transparent_2px)] bg-[length:100px_100%]" />
      </div>
      <div className="h-1 shrink-0 bg-[#34475c]" />
      <div className="relative h-[34px] shrink-0 bg-[#135a46]">
        <div className="absolute inset-y-0 left-0 w-[1500px] bg-[linear-gradient(90deg,rgba(255,255,255,0.15)_2px,transparent_2px)] bg-[length:100px_100%]" />
      </div>
      <div className="relative min-h-0 flex-1 overflow-hidden bg-[#2b3543]">
        <div className="absolute inset-y-0 left-0 w-[1500px] bg-[linear-gradient(90deg,#4b4f55_2px,transparent_2px)] bg-[length:100px_100%]" />
        <div className="relative -mt-[19px] flex flex-col gap-1">
          {tracks.map((t) => <Lane key={t.name} track={t} />)}
        </div>
      </div>
      <div className="flex h-5 shrink-0 items-center border-t-2 border-[#131416] bg-[#171b20]">
        <ZoomStrip label="Horizontal zoom" />
        <div className="ml-0.5 h-3 flex-1 rounded-sm bg-[#3f4b59]" />
      </div>
      <div className="pointer-events-none absolute top-10 bottom-5 left-0 w-[3px] bg-[#0a7f0a]" />
    </div>
  );
}

/* ---------- lower zone ---------- */

function LowerToolbar() {
  const tool = 'h-7 w-[37px]';
  return (
    <div className="flex h-10 shrink-0 items-center bg-[#171b20] pr-[13px] pl-[9px] text-[#dfe3e8]">
      <div className="flex overflow-hidden rounded-md bg-[#252b35]">
        <IconButton label="Mixer panel" className={tool}><MixerIcon /></IconButton>
        <IconButton label="Key editor panel" className="h-7 w-9 rounded-md bg-[#285a82]"><PianoRollIcon /></IconButton>
      </div>
      <div className="ml-[186px] flex overflow-hidden rounded-md bg-[#252b35]">
        <IconButton label="Select" className="h-7 w-9 rounded-md bg-[#3fa9ff] text-black"><PointerIcon /></IconButton>
        <IconButton label="Draw" className={tool}><PencilIcon /></IconButton>
        <IconButton label="Draw percussion" className={tool}><StickIcon /></IconButton>
        <IconButton label="Line" className={tool}><LineIcon /></IconButton>
        <IconButton label="Transform" className={tool}><TransformIcon /></IconButton>
        <IconButton label="Quantize" className={tool}><QuantizeIcon /></IconButton>
      </div>
      <IconButton label="Delete" className="ml-[17px] h-7 w-9 rounded-md bg-[#252b35]"><TrashIcon /></IconButton>
      <div className="ml-[17px] flex overflow-hidden rounded-md bg-[#252b35]">
        <IconButton label="Played durations" className={tool}><WaveIcon /></IconButton>
        <IconButton label="Notated durations" className="h-7 w-9 rounded-md bg-[#3fa9ff] text-black"><BeamedNotes /></IconButton>
      </div>
      <IconButton label="Lock durations" className="ml-[17px] h-7 w-9 rounded-md bg-[#252b35]"><WaveLockIcon /></IconButton>
      <IconButton label="Snap" className="ml-[17px] h-7 w-9 rounded-md bg-[#252b35]"><RulerNoteIcon /></IconButton>
      <IconButton label="Playing techniques" className="ml-[17px] h-7 w-9 rounded-md bg-[#3fa9ff] text-black"><BowingIcon /></IconButton>
      <Select label="Voice" value="Up-stem voice 1" className="ml-[17px] h-7 w-[260px] bg-[#252b35]" />
      <IconButton label="Resize zone" className="ml-auto text-[#8c9197]"><SplitIcon /></IconButton>
    </div>
  );
}

const beatGrid = 'bg-[linear-gradient(90deg,#bcc5c5_2px,transparent_2px),linear-gradient(90deg,#bcc5c5_1px,transparent_1px)] bg-[length:320px_100%,80px_100%]';

function EditorSidebar() {
  return (
    <div className="flex w-[205px] shrink-0 flex-col">
      <div className="px-[3px]">
        <div className="relative">
          <Select label="Instrument" value="Side Drum" className="h-[26px] w-[200px] bg-[#37404c]" pad="pl-[30px]" />
          <span className="pointer-events-none absolute top-[6px] left-2 h-[14px] w-[14px] rounded-full bg-[#3ff3bd]" />
        </div>
      </div>
      <div className="mt-1 bg-[#171b20] text-[11px] leading-5 text-[#c9cdd2]">
        <div className="h-[19px] bg-[#1f2428] pl-[25px]">Side Drum</div>
        <div className="mt-px h-5 pl-[37px]">Rim shot</div>
        <div className="h-5 pl-[37px]">Cross stick</div>
        <div className="h-5 pl-[37px]">Side stick</div>
      </div>
      <div className="mt-auto flex h-[33px] items-center pl-[9px] text-[12px] font-medium text-[#dfe3e8]">Playing Techniques</div>
      <div className="flex h-[99px] shrink-0 flex-col bg-[#2c353e]">
        <div className="flex items-start gap-[6px] pt-1 pl-[7px]">
          <button type="button" aria-label="Close editor" className="h-4 w-[15px] rounded-xs bg-[#222831] pb-1 text-[11px] leading-3 font-bold text-[#dfe3e8]">x</button>
          <Select label="Editor" value="Velocity" className="h-7 w-[167px] bg-[#3f4b59]" />
        </div>
        <div className="mt-3 flex items-center gap-1 pl-[93px]">
          <IconButton label="Histogram" className="h-7 w-[34px] rounded-md bg-[#222831] text-[#dfe3e8]"><BarsIcon /></IconButton>
          <div className="flex h-[34px] w-16 items-center rounded-md border border-[#0f1113] text-[#6f7882]">
            <input aria-label="Velocity value" defaultValue="0" className="w-[34px] min-w-0 bg-transparent text-right text-[12px] outline-none" />
            <div className="ml-auto flex flex-col gap-1.5 pr-[2px]">
              <IconButton label="Velocity up"><Svg w={10} h={7}><path d="M1 5.5 L5 1.5 L9 5.5" strokeWidth="1.2" /></Svg></IconButton>
              <IconButton label="Velocity down"><Svg w={10} h={7}><path d="M1 1.5 L5 5.5 L9 1.5" strokeWidth="1.2" /></Svg></IconButton>
            </div>
          </div>
        </div>
      </div>
      <div className="mt-[2px] flex h-[18px] shrink-0 gap-[2px] text-[12px] text-[#dfe3e8]">
        <button type="button" className="flex flex-1 items-center gap-1 bg-[#343c47] pl-[6px] leading-[18px]">
          <Svg w={10} h={10}><path d="M0.5 5 H9.5 M5 0.5 V9.5" strokeWidth="1.5" /></Svg>
          Add Editor
        </button>
        <IconButton label="Editor menu" className="w-9 bg-[#343c47] text-[#9aa1a9]">
          <Svg w={9} h={10}><path d="M0 1.5 H9 M0 5 H9 M0 8.5 H9" strokeWidth="1.2" /></Svg>
        </IconButton>
      </div>
    </div>
  );
}

function EditorCanvas() {
  return (
    <div className="flex min-w-0 flex-1 flex-col overflow-hidden">
      <div className="relative h-[30px] shrink-0 overflow-hidden bg-[#e6e6e6]">
        <div className="absolute inset-x-0 bottom-0 h-[15px] bg-[linear-gradient(90deg,#bcc5c5_1px,transparent_1px)] bg-[length:40px_100%]" />
        <div className="absolute inset-y-0 left-0 flex bg-[linear-gradient(90deg,#bcc5c5_2px,transparent_2px)] bg-[length:320px_100%]">
          {Array.from({ length: 10 }, (_, i) => (
            <span key={i} className="w-80 pl-[5px] text-[13px] leading-5 text-[#1a1c1e]">{i + 1}</span>
          ))}
        </div>
      </div>
      <div className="relative h-20 shrink-0 overflow-hidden bg-[#e0e6e6]">
        <div className="absolute inset-x-0 top-0 h-5 bg-[#fafafa]" />
        <div className="absolute inset-x-0 top-0 h-[60px] bg-[linear-gradient(0deg,#c6cecd_1px,transparent_1px)] bg-[length:100%_20px]" />
        <div className={`absolute inset-0 ${beatGrid}`} />
        {editorHits.map(([start, length]) => (
          <div
            key={start}
            className="absolute top-0 h-5 bg-gradient-to-b from-[#42f3c0] to-[#1ad69a] shadow-[1px_0_0_#e9fff7]"
            style={{ left: start * EDITOR_BEAT, width: length * EDITOR_BEAT - 1 }}
          />
        ))}
        <div className="absolute inset-y-0 left-0 w-[3px] bg-[#0a7f0a]" />
      </div>
      <div className="min-h-0 flex-1" />
      <div className="relative h-[30px] shrink-0 overflow-hidden bg-[#e6e6e6]">
        <div className="absolute inset-y-0 left-0 w-full bg-[linear-gradient(90deg,#bcc5c5_2px,transparent_2px)] bg-[length:320px_100%]" />
        <div className="absolute inset-x-0 bottom-0 h-[15px] bg-[linear-gradient(90deg,#bcc5c5_1px,transparent_1px)] bg-[length:40px_100%]" />
        {techniqueSpans.map(([from, to]) => (
          <div
            key={from}
            className="absolute top-[2px] h-[26px] rounded-sm border border-[#2b8266] bg-[#85eed0]/88 pl-[5px] text-[12px] leading-6 font-medium text-[#1f7d62]"
            style={{ left: from, width: to - from }}
          >
            Natural
          </div>
        ))}
      </div>
      <div className="flex h-[3px] shrink-0 justify-center gap-1.5 pr-[186px]">
        {[0, 1, 2, 3, 4].map((i) => <span key={i} className="w-[2px] bg-white" />)}
      </div>
      <div className="relative h-[99px] shrink-0 overflow-hidden border-y-[5px] border-[#e6e6e6] bg-[#fafafa]">
        <div className={`absolute inset-0 ${beatGrid}`} />
        {editorHits.map(([start]) => (
          <div key={start} className="absolute top-[19px] bottom-0 w-[10px] border border-b-0 border-[#35a888] bg-[#52f3c0]" style={{ left: start * EDITOR_BEAT }} />
        ))}
        <div className="absolute inset-y-0 left-0 w-[3px] bg-[#0a7f0a]" />
      </div>
      <div className="mt-[2px] flex h-[18px] shrink-0 items-center bg-[#171b20]">
        <ZoomStrip label="Editor zoom" />
        <div className="flex min-w-0 flex-1 pl-0.5">
          <div className="h-3 w-[63%] rounded-sm bg-[#3f4b59]" />
        </div>
      </div>
    </div>
  );
}

function EditorScrollbar() {
  return (
    <div className="flex w-5 shrink-0 flex-col bg-[#171b20]">
      <div className="flex flex-col items-center gap-2 pt-[30px]">
        <div className="-mb-1 h-[126px] w-3 shrink-0 rounded-full bg-[#3f4b59]" />
        <ZoomButton label="Vertical zoom out" />
        <input
          type="range"
          aria-label="Vertical zoom"
          defaultValue={57}
          className="block h-[42px] w-1 shrink-0 appearance-none rounded-full bg-[linear-gradient(180deg,#3fa9ff_55%,#000000_55%)] [writing-mode:vertical-lr] [&::-webkit-slider-thumb]:h-[14px] [&::-webkit-slider-thumb]:w-[14px] [&::-webkit-slider-thumb]:appearance-none [&::-webkit-slider-thumb]:rounded-full [&::-webkit-slider-thumb]:border [&::-webkit-slider-thumb]:border-black [&::-webkit-slider-thumb]:bg-[#414c59]"
        />
        <ZoomButton label="Vertical zoom in" plus />
      </div>
    </div>
  );
}

function StatusBar() {
  return (
    <footer className="flex h-[26px] shrink-0 items-center bg-[#1f2428] pl-[3px] text-[12px] font-medium text-[#dfe3e8]">
      <button type="button" aria-label="Rhythmic grid" className="flex h-[22px] w-10 items-center justify-between rounded-sm bg-[#343c47] pr-[7px] pl-1">
        <EighthNote />
        <Svg w={10} h={7}><path d="M1 1.5 L5 5.5 L9 1.5" strokeWidth="1.5" /></Svg>
      </button>
      <div className="ml-1.5 flex h-[22px] overflow-hidden rounded-sm bg-[#343c47]">
        <button type="button" className="w-[86px] rounded-sm bg-[#285a82] leading-5 whitespace-nowrap text-white">Concert Pitch</button>
        <button type="button" className="w-[106px] leading-5 whitespace-nowrap">Transposed Pitch</button>
      </div>
      <div className="ml-px h-full w-[2px] bg-[#131416]" />
      <div className="flex flex-1 justify-center">
        <IconButton label="Hide lower zone" className="h-5 w-8"><Svg w={18} h={7}><path d="M1.5 1.5 Q5 2.5 9 5 Q13 2.5 16.5 1.5" strokeWidth="2.2" strokeLinecap="round" /></Svg></IconButton>
      </div>
      <label className="flex h-full items-center gap-[5px] border-l-2 border-[#131416] pr-[34px] pl-1 font-normal">
        <input type="checkbox" role="switch" defaultChecked className="peer sr-only" />
        <span className="flex h-[10px] w-5 justify-end rounded-full bg-[#37404c]"><span className="h-[10px] w-[10px] rounded-full bg-[#3fa9ff]" /></span>
        Follow playhead
      </label>
    </footer>
  );
}

export default function App() {
  return (
    <div className="flex h-screen min-h-[1200px] flex-col overflow-hidden bg-white px-14 pt-[37px] pb-[73px] font-['Noto_Sans_CJK_SC','Noto_Sans',sans-serif]">
      <main className="relative flex min-h-0 flex-1 flex-col overflow-hidden rounded-[10px] border border-black bg-[#131416] shadow-[0_22px_40px_rgba(0,0,0,0.55),0_0_12px_rgba(0,0,0,0.35)]">
        <TitleBar />
        <Toolbar />
        <div className="mt-[2px] flex min-h-0 flex-1">
          <div className="flex w-[551px] shrink-0 flex-col">
            <FlowBar />
            <div className="flex min-h-0 flex-1 gap-[6px] pt-1 pb-[2px] pl-[7px]">
              <Inspector />
              <TrackHeaders />
            </div>
          </div>
          <Arrangement />
          <div className="ml-[2px] flex w-4 shrink-0 flex-col bg-[#171b20] pb-[15px]">
            <div className="h-[119px] shrink-0 border-b-2 border-[#131416]" />
            <div className="flex-[363]" />
            <div className="mx-auto w-3 flex-[747] rounded-full bg-[#3f4b59]" />
          </div>
        </div>
        <div className="h-[2px] shrink-0" />
        <LowerToolbar />
        <div className="mt-[2px] flex h-[396px] shrink-0">
          <EditorSidebar />
          <div className="w-[2px] shrink-0" />
          <EditorCanvas />
          <div className="w-[2px] shrink-0" />
          <EditorScrollbar />
        </div>
        <div className="h-[2px] shrink-0" />
        <StatusBar />
        <div className="pointer-events-none absolute inset-0 rounded-[9px] border border-white/25" />
      </main>
    </div>
  );
}
